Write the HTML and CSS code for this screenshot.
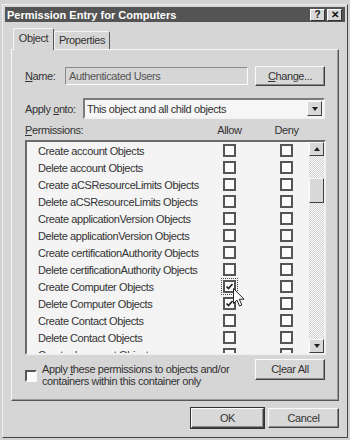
FILE: index.html
```html
<!DOCTYPE html>
<html lang="en">

<head>
    <meta charset="UTF-8">
    <title>Permission Entry for Computers</title>
    <link rel="stylesheet" href="styles.css">
</head>

<body>
    <div class="window">
        <div class="titlebar">
            <span class="title">Permission Entry for Computers</span>
            <div class="capBtns">
                <span class="capBtn">?</span>
                <span class="capBtn">&#x2715;</span>
            </div>
        </div>

        <div class="client">
            <div class="tabs">
                <div class="tab active">Object</div>
                <div class="tab">Properties</div>
            </div>

            <div class="panel">
                <div class="nameRow">
                    <span class="lblName"><u>N</u>ame:</span>
                    <div class="field">Authenticated Users</div>
                    <div class="btn btnSide"><u>C</u>hange...</div>
                </div>

                <div class="applyRow">
                    <span class="lblApply">Apply <u>o</u>nto:</span>
                    <div class="select">
                        <span>This object and all child objects</span>
                        <span class="dropBtn"><i class="triDown"></i></span>
                    </div>
                </div>

                <div class="permHead">
                    <span class="colName"><u>P</u>ermissions:</span>
                    <span class="colAllow">Allow</span>
                    <span class="colDeny">Deny</span>
                </div>

                <div class="list">
                    <div class="rows">
                        <div class="perm"><span class="pname">Create account Objects</span><span class="cb"></span><span class="cb deny"></span></div>
                        <div class="perm"><span class="pname">Delete account Objects</span><span class="cb"></span><span class="cb deny"></span></div>
                        <div class="perm"><span class="pname">Create aCSResourceLimits Objects</span><span class="cb"></span><span class="cb deny"></span></div>
                        <div class="perm"><span class="pname">Delete aCSResourceLimits Objects</span><span class="cb"></span><span class="cb deny"></span></div>
                        <div class="perm"><span class="pname">Create applicationVersion Objects</span><span class="cb"></span><span class="cb deny"></span></div>
                        <div class="perm"><span class="pname">Delete applicationVersion Objects</span><span class="cb"></span><span class="cb deny"></span></div>
                        <div class="perm"><span class="pname">Create certificationAuthority Objects</span><span class="cb"></span><span class="cb deny"></span></div>
                        <div class="perm"><span class="pname">Delete certificationAuthority Objects</span><span class="cb"></span><span class="cb deny"></span></div>
                        <div class="perm">
                            <span class="pname">Create Computer Objects</span>
                            <span class="cb focus"><svg viewBox="0 0 9 9" width="9" height="9"><path d="M1.5 4.5 L3.5 6.5 L7.5 2" /></svg></span>
                            <span class="cb deny"></span>
                        </div>
                        <div class="perm">
                            <span class="pname">Delete Computer Objects</span>
                            <span class="cb"><svg viewBox="0 0 9 9" width="9" height="9"><path d="M1.5 4.5 L3.5 6.5 L7.5 2" /></svg></span>
                            <span class="cb deny"></span>
                        </div>
                        <div class="perm"><span class="pname">Create Contact Objects</span><span class="cb"></span><span class="cb deny"></span></div>
                        <div class="perm"><span class="pname">Delete Contact Objects</span><span class="cb"></span><span class="cb deny"></span></div>
                        <div class="perm"><span class="pname">Create document Objects</span><span class="cb"></span><span class="cb deny"></span></div>
                    </div>
                    <div class="scrollbar">
                        <span class="sbBtn"><i class="triUp"></i></span>
                        <span class="thumb"></span>
                        <span class="sbBtn sbDown"><i class="triDown"></i></span>
                    </div>
                </div>

                <div class="bottomRow">
                    <span class="cb plain"></span>
                    <span class="applyText">Apply <u>t</u>hese permissions to objects and/or<br>containers within this container only</span>
                    <div class="btn btnSide btnClear">C<u>l</u>ear All</div>
                </div>
            </div>

            <div class="footer">
                <div class="btn btnOk">OK</div>
                <div class="btn btnCancel">Cancel</div>
            </div>
        </div>
    </div>

    <!-- mouse pointer over the checked box -->
    <svg class="cursor" viewBox="0 0 12 19" width="12" height="19">
        <path d="M0.5 0.5 L0.5 15.5 L4 12 L6.5 18 L8.8 17 L6.3 11.2 L11 11.2 Z" fill="#fff" stroke="#222" stroke-width="1" />
    </svg>
</body>

</html>
```

FILE: styles.css
```css
* {
    box-sizing: border-box;
}

body {
    margin: 0;
    background-color: #d2d2d2;
    font-family: "Liberation Sans", Arial, sans-serif;
    font-size: 11px;
    letter-spacing: -0.4px;
    color: #333;
}

u {
    text-decoration-thickness: 1px;
    text-underline-offset: 1px;
}

.window {
    margin: 4px 0 0 2px;
    width: 346px;
    height: 434px;
    border: 1px solid;
    border-color: #eeeeee #444 #444 #eeeeee;
    padding: 2px;
    background-color: #d6d6d6;
}

.titlebar {
    height: 15px;
    background-color: #545454;
    display: flex;
    align-items: center;
    justify-content: space-between;
    padding: 0 3px 0 2px;
}

.title {
    color: #fff;
    font-weight: bold;
    letter-spacing: 0;
}

.capBtns {
    display: flex;
    gap: 2px;
}

.capBtn {
    width: 15px;
    height: 12px;
    background-color: #d8d8d8;
    border: 1px solid;
    border-color: #fff #333 #333 #fff;
    color: #111;
    font-weight: bold;
    font-size: 10px;
    line-height: 10px;
    text-align: center;
    letter-spacing: 0;
}

.client {
    padding: 6px 0 0 6px;
}

/* tabs */
.tabs {
    display: flex;
    align-items: flex-end;
    height: 22px;
    padding-left: 2px;
    margin-bottom: -1px;
    position: relative;
    z-index: 1;
}

.tab {
    height: 18px;
    width: 56px;
    margin-bottom: 1px;
    border: 1px solid;
    border-bottom: none;
    border-color: #f6f6f6 #555 #555 #f6f6f6;
    border-radius: 2px 2px 0 0;
    background-color: #d6d6d6;
    text-align: center;
    line-height: 17px;
}

.tab.active {
    height: 22px;
    width: 41px;
    margin-bottom: 0;
    line-height: 19px;
}

.panel {
    width: 328px;
    height: 352px;
    border: 1px solid;
    border-color: #f6f6f6 #555 #555 #f6f6f6;
    box-shadow: inset -1px -1px 0 #9a9a9a;
    padding: 16px 13px 0 13px;
}

/* name / apply onto */
.nameRow {
    display: flex;
    align-items: center;
    height: 20px;
}

.lblName {
    width: 40px;
}

.field {
    width: 183px;
    height: 18px;
    border: 1px solid;
    border-color: #8a8a8a #fafafa #fafafa #8a8a8a;
    padding-left: 3px;
    line-height: 16px;
    color: #555;
}

.btn {
    background-color: #d8d8d8;
    border: 1px solid;
    border-color: #fafafa #404040 #404040 #fafafa;
    box-shadow: inset -1px -1px 0 #8c8c8c;
    text-align: center;
}

.btnSide {
    margin-left: auto;
    width: 70px;
    height: 20px;
    line-height: 18px;
}

.applyRow {
    display: flex;
    align-items: center;
    height: 21px;
    margin-top: 12px;
}

.lblApply {
    width: 58px;
}

.select {
    flex: 1;
    height: 21px;
    border: 2px solid;
    border-color: #7a7a7a #f2f2f2 #f2f2f2 #7a7a7a;
    background-color: #f6f6f6;
    display: flex;
    align-items: center;
    justify-content: space-between;
    padding-left: 2px;
}

.dropBtn {
    width: 15px;
    height: 15px;
    margin-right: 1px;
    background-color: #d8d8d8;
    border: 1px solid;
    border-color: #fafafa #404040 #404040 #fafafa;
    display: flex;
    align-items: center;
    justify-content: center;
}

.triDown {
    width: 0;
    height: 0;
    border-left: 3.5px solid transparent;
    border-right: 3.5px solid transparent;
    border-top: 4px solid #222;
}

.triUp {
    width: 0;
    height: 0;
    border-left: 3.5px solid transparent;
    border-right: 3.5px solid transparent;
    border-bottom: 4px solid #222;
}

/* permission list */
.permHead {
    display: flex;
    height: 15px;
    margin-top: 5px;
    line-height: 13px;
}

.colName {
    width: 190px;
}

.colAllow,
.colDeny {
    width: 29px;
    text-align: center;
}

.colDeny {
    margin-left: 28px;
}

.list {
    display: flex;
    height: 215px;
    margin-top: 1px;
    width: 301px;
    border: 2px solid;
    border-color: #6a6a6a #f0f0f0 #f0f0f0 #6a6a6a;
    background-color: #f4f4f4;
}

.rows {
    flex: 1;
    overflow: hidden;
}

.perm {
    display: flex;
    align-items: center;
    height: 17px;
    padding-left: 11px;
}

.pname {
    width: 185px;
    white-space: nowrap;
    overflow: hidden;
}

.cb {
    width: 13px;
    height: 13px;
    flex-shrink: 0;
    border: 2px solid #555;
    background-color: #fbfbfb;
    display: flex;
    align-items: center;
    justify-content: center;
}

.cb svg path {
    fill: none;
    stroke: #222;
    stroke-width: 1.7;
}

.cb.deny {
    margin-left: 44px;
}

.cb.focus {
    outline: 1px dotted #444;
    outline-offset: 1px;
}

.scrollbar {
    width: 15px;
    display: flex;
    flex-direction: column;
    background: repeating-conic-gradient(#fafafa 0 25%, #d2d2d2 0 50%) 0 0 / 2px 2px;
}

.sbBtn {
    height: 14px;
    background-color: #d8d8d8;
    border: 1px solid;
    border-color: #fafafa #404040 #404040 #fafafa;
    display: flex;
    align-items: center;
    justify-content: center;
}

.thumb {
    height: 25px;
    margin-top: 22px;
    background-color: #d8d8d8;
    border: 1px solid;
    border-color: #fafafa #404040 #404040 #fafafa;
}

.sbDown {
    margin-top: auto;
}

/* bottom of the panel */
.bottomRow {
    display: flex;
    align-items: flex-start;
    margin-top: 4px;
}

.cb.plain {
    width: 12px;
    height: 12px;
    margin-top: 11px;
    border-color: #555 #fafafa #fafafa #555;
}

.applyText {
    margin: 4px 0 0 5px;
    line-height: 12px;
}

.btnClear {
    height: 21px;
    line-height: 19px;
}

.footer {
    width: 328px;
    display: flex;
    justify-content: flex-end;
    gap: 4px;
    padding-top: 7px;
}

.footer .btn {
    height: 20px;
    line-height: 18px;
}

.btnOk {
    width: 73px;
    outline: 1px solid #333;
}

.btnCancel {
    width: 71px;
}

.cursor {
    position: absolute;
    left: 233px;
    top: 288px;
}
```
